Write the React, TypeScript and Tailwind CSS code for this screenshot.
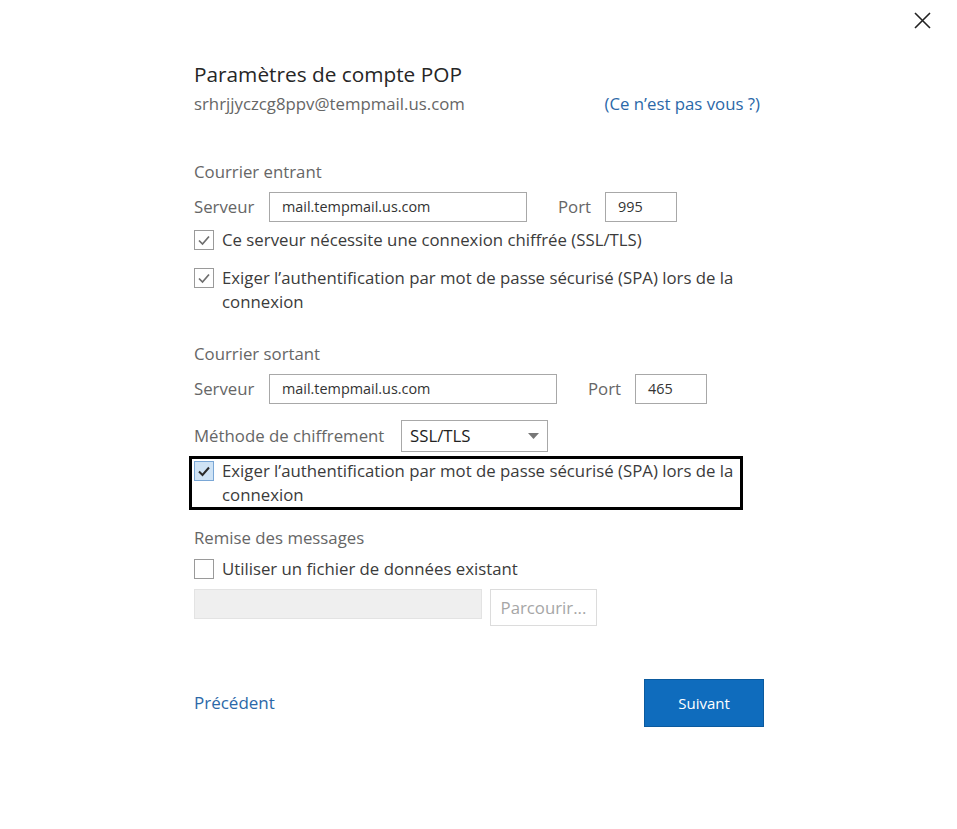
import React from "react";

const Check = ({ dark = false }: { dark?: boolean }) => (
  <svg width="14" height="14" viewBox="0 0 14 14" fill="none">
    <path
      d="M2 7.5 L5.5 11 L12 3.5"
      stroke={dark ? "#2b2b2b" : "#6e6e6e"}
      strokeWidth={dark ? 2 : 1.7}
    />
  </svg>
);

const CheckBox = ({ state }: { state: "on" | "off" | "focus" }) => (
  <span
    className={
      "mt-[2px] flex h-[20px] w-[20px] shrink-0 items-center justify-center border " +
      (state === "focus" ? "border-[#7aa7d6] bg-[#cfe3f5]" : "border-[#9a9a9a] bg-white")
    }
  >
    {state !== "off" && <Check dark={state === "focus"} />}
  </span>
);

const CheckRow = ({
  state,
  children,
}: {
  state: "on" | "off" | "focus";
  children: React.ReactNode;
}) => (
  <div className="flex items-start gap-[8px] text-[16.8px] leading-[24px] text-[#3b3b3b]">
    <CheckBox state={state} />
    <span>{children}</span>
  </div>
);

const TextBox = ({ value, w }: { value: string; w: string }) => (
  <div
    className={`${w} flex h-[30px] items-center border border-[#a8a8a8] px-[12px] text-[14.4px] text-[#333]`}
  >
    {value}
  </div>
);

export default function App() {
  return (
    <div className="relative h-[829px] w-[957px] overflow-hidden bg-white font-['Segoe_UI','Open_Sans',sans-serif]">
      <button className="absolute left-[914px] top-[12px] h-[17px] w-[17px]">
        <svg width="17" height="17" viewBox="0 0 17 17">
          <path d="M1 1 L16 16 M16 1 L1 16" stroke="#222" strokeWidth="1.6" />
        </svg>
      </button>

      <div className="ml-[194px] w-[570px] pt-[60px]">
        <h1 className="text-[20.8px] leading-[28px] text-[#262626]">Paramètres de compte POP</h1>
        <div className="mt-[4px] flex justify-between text-[16.8px] leading-[24px]">
          <span className="text-[#666]">srhrjjyczcg8ppv@tempmail.us.com</span>
          <span className="mr-[4px] text-[#2b68a8]">(Ce n’est pas vous ?)</span>
        </div>

        {/* Courrier entrant */}
        <div className="mt-[44px] text-[16.8px] leading-[24px] text-[#666]">Courrier entrant</div>
        <div className="mt-[8px] flex items-center text-[16.8px] text-[#666]">
          <span className="w-[75px]">Serveur</span>
          <TextBox value="mail.tempmail.us.com" w="w-[258px]" />
          <span className="ml-[31px] w-[47px]">Port</span>
          <TextBox value="995" w="w-[72px]" />
        </div>
        <div className="mt-[6px]">
          <CheckRow state="on">Ce serveur nécessite une connexion chiffrée (SSL/TLS)</CheckRow>
        </div>
        <div className="mt-[14px]">
          <CheckRow state="on">
            Exiger l’authentification par mot de passe sécurisé (SPA) lors de la connexion
          </CheckRow>
        </div>

        {/* Courrier sortant */}
        <div className="mt-[28px] text-[16.8px] leading-[24px] text-[#666]">Courrier sortant</div>
        <div className="mt-[8px] flex items-center text-[16.8px] text-[#666]">
          <span className="w-[75px]">Serveur</span>
          <TextBox value="mail.tempmail.us.com" w="w-[288px]" />
          <span className="ml-[31px] w-[47px]">Port</span>
          <TextBox value="465" w="w-[72px]" />
        </div>
        <div className="mt-[16px] flex items-center text-[16.8px] text-[#666]">
          <span className="w-[207px]">Méthode de chiffrement</span>
          <div className="flex h-[32px] w-[147px] items-center justify-between border border-[#a8a8a8] pl-[8px] pr-[8px] text-[16.8px] text-[#222]">
            <span>SSL/TLS</span>
            <svg width="11" height="6" viewBox="0 0 11 6">
              <path d="M0 0 L11 0 L5.5 6 Z" fill="#777" />
            </svg>
          </div>
        </div>
        <div className="-ml-[5px] mt-[4px] w-[554px] border-[3px] border-black pl-[2px]">
          <CheckRow state="focus">
            Exiger l’authentification par mot de passe sécurisé (SPA) lors de la connexion
          </CheckRow>
        </div>

        {/* Remise des messages */}
        <div className="mt-[16px] text-[16.8px] leading-[24px] text-[#666]">Remise des messages</div>
        <div className="mt-[7px]">
          <CheckRow state="off">Utiliser un fichier de données existant</CheckRow>
        </div>
        <div className="mt-[8px] flex items-start gap-[8px]">
          <div className="h-[30px] w-[288px] border border-[#e3e3e3] bg-[#efefef]" />
          <div className="flex h-[37px] w-[107px] items-center justify-center border border-[#dcdcdc] text-[16.8px] text-[#a6a6a6]">
            Parcourir...
          </div>
        </div>

        <div className="mt-[53px] flex items-center justify-between">
          <span className="text-[17px] text-[#2b68a8]">Précédent</span>
          <button className="h-[48px] w-[120px] border border-[#0b5a9e] bg-[#0f6cbd] text-[15px] text-white">
            Suivant
          </button>
        </div>
      </div>
    </div>
  );
}
